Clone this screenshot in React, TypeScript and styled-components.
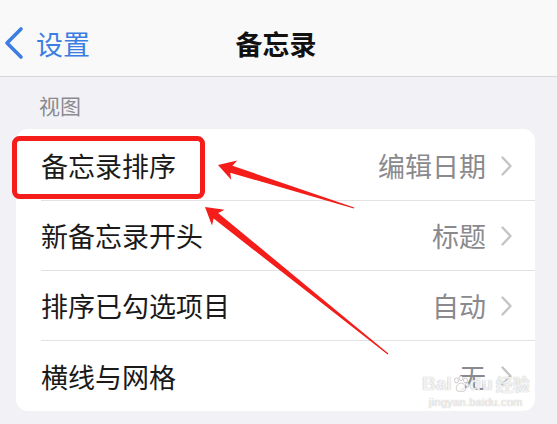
import styled, { createGlobalStyle } from 'styled-components';

const rows = [
  { label: '备忘录排序', value: '编辑日期' },
  { label: '新备忘录开头', value: '标题' },
  { label: '排序已勾选项目', value: '自动' },
  { label: '横线与网格', value: '无' },
];

// annotation arrows: tip, tail
const arrows = [
  { tip: [218, 165], tail: [354, 208] },
  { tip: [205, 207], tail: [388, 354] },
];

const arrowPoints = (tip: number[], tail: number[]) => {
  const dx = tail[0] - tip[0];
  const dy = tail[1] - tip[1];
  const len = Math.hypot(dx, dy);
  const ux = dx / len;
  const uy = dy / len;
  const nx = -uy;
  const ny = ux;
  const at = (a: number, b: number) =>
    `${tip[0] + ux * a + nx * b},${tip[1] + uy * a + ny * b}`;
  return [
    at(0, 0),
    at(17, 10),
    at(14, 3.6),
    `${tail[0] + nx * 0.6},${tail[1] + ny * 0.6}`,
    `${tail[0] - nx * 0.6},${tail[1] - ny * 0.6}`,
    at(14, -3.6),
    at(17, -10),
  ].join(' ');
};

const App: React.FC = () => {
  return (
    <Page>
      <GlobalStyle />
      <NavBar>
        <BackButton>
          <svg width="24" height="34" viewBox="0 0 24 34">
            <path
              d="M19 3 L5 17 L19 31"
              fill="none"
              stroke="#3b7de3"
              strokeWidth="3.6"
              strokeLinecap="round"
              strokeLinejoin="round"
            />
          </svg>
          <BackText>设置</BackText>
        </BackButton>
        <Title>备忘录</Title>
        <span />
      </NavBar>
      <SectionLabel>视图</SectionLabel>
      <Card>
        {rows.map((row, idx) => (
          <Row key={row.label}>
            <RowInner last={idx === rows.length - 1}>
              <Label>{row.label}</Label>
              <Value>{row.value}</Value>
              <svg width="13" height="20" viewBox="0 0 13 20">
                <path
                  d="M2.5 1.5 L10.5 10 L2.5 18.5"
                  fill="none"
                  stroke="#c4c4c8"
                  strokeWidth="2.4"
                  strokeLinecap="round"
                  strokeLinejoin="round"
                />
              </svg>
            </RowInner>
          </Row>
        ))}
      </Card>
      <Annotations width="557" height="424" viewBox="0 0 557 424">
        <rect
          x="14.5"
          y="138.5"
          width="188"
          height="58"
          rx="5"
          fill="none"
          stroke="#f41d1a"
          strokeWidth="5"
        />
        {arrows.map((a, i) => (
          <polygon key={i} points={arrowPoints(a.tip, a.tail)} fill="#f41d1a" />
        ))}
      </Annotations>
      <Watermark>
        <WatermarkBrand>
          Bai
          <svg width="18" height="18" viewBox="0 0 20 20">
            <g fill="rgba(255,255,255,0.85)" stroke="rgba(120,120,120,0.5)" strokeWidth="0.8">
              <ellipse cx="5" cy="6" rx="2.2" ry="2.8" />
              <ellipse cx="10" cy="3.5" rx="2.2" ry="2.8" />
              <ellipse cx="15" cy="6" rx="2.2" ry="2.8" />
              <ellipse cx="17" cy="11" rx="2" ry="2.5" />
              <path d="M10 9 C6 9 4 14 5 16.5 C6 19 9 18 10 18 C11 18 14 19 15 16.5 C16 14 14 9 10 9 Z" />
            </g>
          </svg>
          du
          <WatermarkCn>经验</WatermarkCn>
        </WatermarkBrand>
        <WatermarkUrl>jingyan.baidu.com</WatermarkUrl>
      </Watermark>
    </Page>
  );
};

export default App;

const GlobalStyle = createGlobalStyle`
  html, body {
    margin: 0;
    padding: 0;
    background: #f2f2f6;
  }
  body {
    font-family: "Noto Sans CJK SC", "Noto Sans", sans-serif;
  }
`;

const Page = styled.div`
  position: relative;
  width: 557px;
  height: 424px;
  overflow: hidden;
  background: #f2f2f6;
`;

const NavBar = styled.header`
  height: 77px;
  box-sizing: border-box;
  display: grid;
  grid-template-columns: 1fr auto 1fr;
  align-items: center;
  padding: 10px 7px 0 2px;
  background: #f9f9f9;
  border-bottom: 1px solid #d7d7da;
`;

const BackButton = styled.div`
  display: flex;
  align-items: center;
  gap: 10px;
`;

const BackText = styled.span`
  font-size: 27px;
  color: #3b7de3;
  line-height: 1;
`;

const Title = styled.h1`
  margin: 0;
  font-size: 27px;
  font-weight: 700;
  color: #111;
  line-height: 1;
`;

const SectionLabel = styled.div`
  padding: 16px 0 0 39px;
  height: 36px;
  font-size: 21px;
  line-height: 25px;
  color: #8b8b8f;
`;

const Card = styled.section`
  margin: 0 22px 0 16px;
  padding-top: 2px;
  background: #fff;
  border-radius: 12px;
  overflow: hidden;
`;

const Row = styled.div`
  padding-left: 25px;
`;

const RowInner = styled.div<{ last: boolean }>`
  height: 70px;
  box-sizing: border-box;
  display: flex;
  align-items: center;
  gap: 14px;
  padding-right: 22px;
  border-bottom: ${({ last }) => (last ? 'none' : '1px solid #e2e2e4')};
`;

const Label = styled.span`
  flex: 1;
  font-size: 27px;
  color: #1a1a1a;
`;

const Value = styled.span`
  font-size: 27px;
  color: #8a8a8e;
`;

const Annotations = styled.svg`
  position: absolute;
  left: 0;
  top: 0;
  pointer-events: none;
`;

const Watermark = styled.div`
  position: absolute;
  left: 422px;
  top: 372px;
  display: flex;
  flex-direction: column;
  align-items: center;
  color: rgba(255, 255, 255, 0.85);
  text-shadow: 0 0 1px rgba(90, 90, 90, 0.55);
  pointer-events: none;
`;

const WatermarkBrand = styled.div`
  display: flex;
  align-items: center;
  font-family: "Liberation Sans", Arial, sans-serif;
  font-size: 19px;
  font-weight: 700;
  line-height: 24px;
`;

const WatermarkCn = styled.span`
  margin-left: 3px;
  font-family: "Noto Sans CJK SC", sans-serif;
  font-size: 17px;
  font-weight: 700;
`;

const WatermarkUrl = styled.div`
  font-family: "Liberation Sans", Arial, sans-serif;
  font-size: 11px;
  line-height: 13px;
  letter-spacing: 0.3px;
`;
